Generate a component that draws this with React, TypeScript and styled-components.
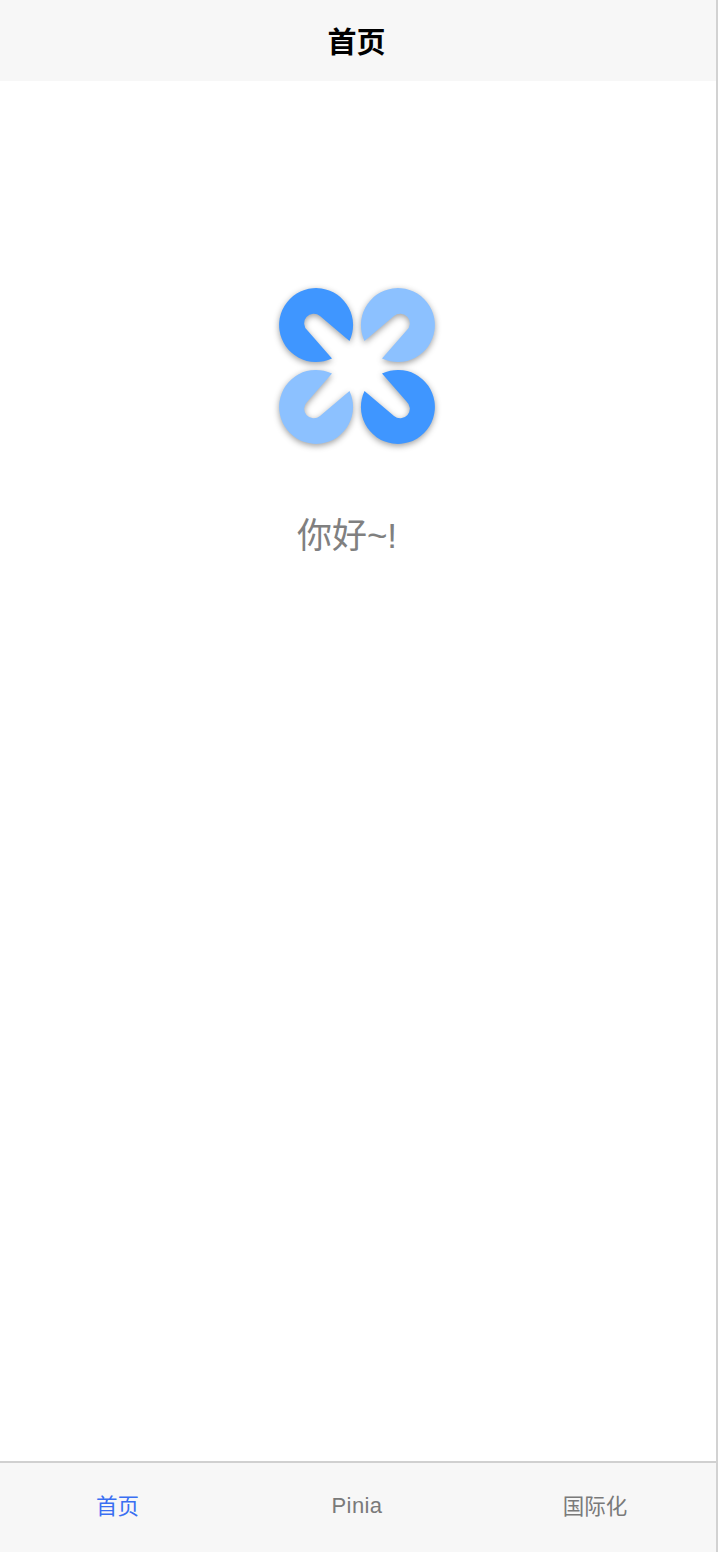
import React from 'react';
import styled, { createGlobalStyle } from 'styled-components';

const GlobalStyle = createGlobalStyle`
  html, body {
    margin: 0;
    padding: 0;
    background: #fff;
  }
  * {
    box-sizing: border-box;
  }
`;

const Page = styled.div`
  width: 718px;
  height: 1552px;
  display: flex;
  flex-direction: column;
  border-right: 2px solid #d2d2d2;
  font-family: "Liberation Sans", "Noto Sans CJK SC", sans-serif;
`;

const NavBar = styled.header`
  height: 81px;
  flex: none;
  display: flex;
  align-items: center;
  justify-content: center;
  padding-bottom: 2px;
  padding-right: 3px;
  background: #f7f7f7;
  color: #000;
  font-size: 29px;
  font-weight: 700;
`;

const Content = styled.main`
  flex: 1;
  display: flex;
  flex-direction: column;
  align-items: center;
  padding-top: 197px;
  padding-right: 2px;
`;

const Logo = styled.svg`
  width: 176px;
  height: 176px;
  display: block;
  filter: drop-shadow(0 2px 3px rgba(0, 0, 0, 0.38));
`;

const Greeting = styled.div`
  margin-top: 58px;
  padding-right: 20px;
  font-size: 35px;
  line-height: 48px;
  color: #808080;
`;

const TabBar = styled.nav`
  height: 91px;
  flex: none;
  display: grid;
  grid-template-columns: repeat(3, 1fr);
  padding-right: 2px;
  background: #f7f7f7;
  border-top: 2px solid #d0d0d0;
`;

const Tab = styled.div<{ $active?: boolean; $latin?: boolean }>`
  display: flex;
  align-items: center;
  justify-content: center;
  padding-bottom: ${({ $latin }) => ($latin ? '3px' : '7px')};
  padding-right: ${({ $active }) => ($active ? '3px' : '0')};
  font-size: ${({ $latin }) => ($latin ? '22px' : '21.5px')};
  letter-spacing: ${({ $latin }) => ($latin ? '0.4px' : '0')};
  color: ${({ $active }) => ($active ? '#3a6ff2' : '#7a7a7a')};
`;

const BLOB = 'M63 80.5A37 37 0 1 1 80.5 63L51 38A9.5 9.5 0 0 0 38.5 52.5Z';

const App = () => (
  <>
    <GlobalStyle />
    <Page>
      <NavBar>首页</NavBar>
      <Content>
        <Logo viewBox="0 0 176 176">
          <path d={BLOB} fill="#3f96ff" />
          <path d={BLOB} fill="#8cc1ff" transform="matrix(-1 0 0 1 176 0)" />
          <path d={BLOB} fill="#8cc1ff" transform="matrix(1 0 0 -1 0 176)" />
          <path d={BLOB} fill="#3f96ff" transform="rotate(180 88 88)" />
        </Logo>
        <Greeting>你好~!</Greeting>
      </Content>
      <TabBar>
        <Tab $active>首页</Tab>
        <Tab $latin>Pinia</Tab>
        <Tab>国际化</Tab>
      </TabBar>
    </Page>
  </>
);

export default App;
